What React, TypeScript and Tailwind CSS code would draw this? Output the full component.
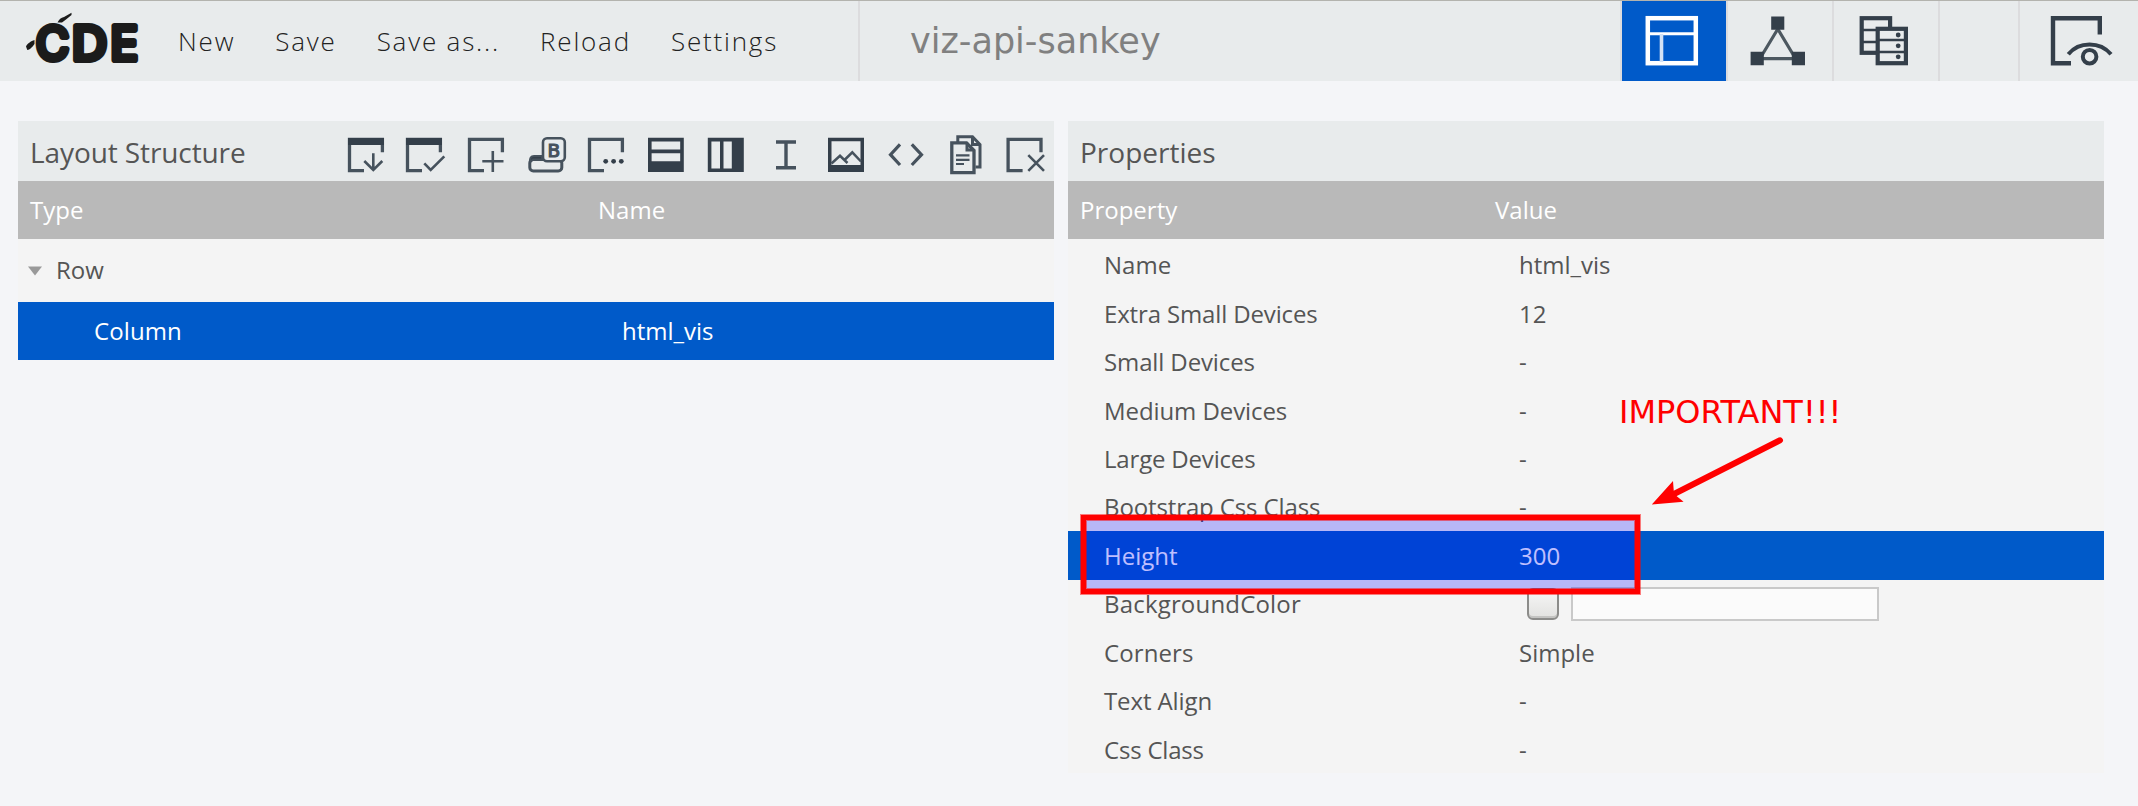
import type { ReactNode } from "react";

const INK = "#343f4a";

const menu = ["New", "Save", "Save as...", "Reload", "Settings"];

const properties: [string, string, string][] = [
  ["Name", "html_vis", ""],
  ["Extra Small Devices", "12", "tracking-[-0.14px]"],
  ["Small Devices", "-", "tracking-[-0.12px]"],
  ["Medium Devices", "-", "tracking-[-0.08px]"],
  ["Large Devices", "-", "tracking-[-0.18px]"],
  ["Bootstrap Css Class", "-", "tracking-[-0.12px]"],
  ["Height", "300", ""],
  ["BackgroundColor", "", "tracking-[0.18px]"],
  ["Corners", "Simple", "tracking-[0.1px]"],
  ["Text Align", "-", "tracking-[-0.1px]"],
  ["Css Class", "-", "tracking-[-0.2px]"],
];

function Tool({ children }: { children: ReactNode }) {
  return (
    <svg width="60" height="60" viewBox="0 0 60 60" fill="none" stroke="#46525d" strokeWidth="3" className="shrink-0">
      {children}
    </svg>
  );
}

function Frame({ x = 0, head = false }: { x?: number; head?: boolean }) {
  return (
    <g transform={`translate(${x} 0)`}>
      <path d="M28 49.6H13.5V18.3H46.4V31.2" strokeWidth="3.3" />
      {head && <path d="M12 20.5H48" stroke={INK} strokeWidth="7" />}
    </g>
  );
}

function Toolbar() {
  return (
    <div className="flex w-[718px] overflow-hidden">
      <Tool>
        <Frame head />
        <path d="M37.3 32.3V49.5M28.3 40L37.3 49L46.3 40" strokeWidth="2.6" />
      </Tool>
      <Tool>
        <Frame x={-2} head />
        <path d="M28.3 42.3L34.7 49L48.3 35.3" strokeWidth="2.6" />
      </Tool>
      <Tool>
        <Frame />
        <path d="M26.3 40.3H47.5M36.8 30V51" strokeWidth="2.6" />
      </Tool>
      <Tool>
        <rect x="13.8" y="38.6" width="32" height="11.4" rx="3.5" />
        <path d="M14 41C13.5 37 15 35 18 35H26V38.5H17Z" fill={INK} strokeWidth="2" />
        <rect x="27" y="17.2" width="21.8" height="23" rx="4" fill="#e8ebec" strokeWidth="2.6" />
        <text x="37.9" y="35.6" textAnchor="middle" fontFamily="DejaVu Sans, sans-serif" fontSize="18.5" fill="#46525d" stroke="#46525d" strokeWidth="1.2">
          B
        </text>
      </Tool>
      <Tool>
        <Frame />
        <g fill={INK} stroke="none">
          <circle cx="29.7" cy="40.3" r="2.4" />
          <circle cx="37.6" cy="40.3" r="2.4" />
          <circle cx="45.3" cy="40.3" r="2.4" />
        </g>
      </Tool>
      <Tool>
        <path d="M12 16.7H47.8V51H12ZM15.6 20.6V28.4H44.2V20.6ZM15.6 32.2V40.2H44.2V32.2Z" fill={INK} fillRule="evenodd" stroke="none" />
      </Tool>
      <Tool>
        <path d="M11.8 16.7H47.8V51H11.8ZM15.4 20.6V47.6H24V20.6ZM27.5 20.6V47.6H35.8V20.6Z" fill={INK} fillRule="evenodd" stroke="none" />
      </Tool>
      <Tool>
        <path d="M20 21H40M20 46.8H40M30 21V46.8" strokeWidth="3.4" />
      </Tool>
      <Tool>
        <path d="M12 16.7H48V51H12ZM15.5 20.2V44H44.5V20.2Z" fill={INK} fillRule="evenodd" stroke="none" />
        <path d="M15.5 42.5L24 34.8L31.5 42M28.5 39L36.3 31.3L45 40.5" strokeWidth="2.5" />
      </Tool>
      <Tool>
        <path d="M24 23.3L14.5 33.7L24 44M35.8 23.3L45.5 33.7L35.8 44" strokeWidth="3.2" />
      </Tool>
      <Tool>
        <path d="M21.8 21V15.8H36.5L44 23.5V46H39.5M36.5 15.8V23.5H44" strokeWidth="3" />
        <path d="M15.8 21.8H30.5L38 29.5V51.6H15.8Z" fill="#e8ebec" strokeWidth="3.3" />
        <path d="M31 21.8V29H38" />
        <path d="M20 34.3H33.5M20 38.9H33.5M20 43H28" strokeWidth="2.2" />
      </Tool>
      <Tool>
        <Frame x={-1.4} />
        <path d="M32.3 34.2L48 49.8M48 34.2L32.3 49.8" strokeWidth="2.6" />
      </Tool>
    </div>
  );
}

function Logo() {
  return (
    <svg width="150" height="80" viewBox="0 1 150 80" className="shrink-0">
      <g fontFamily="Inter, sans-serif" fontWeight="400" fontSize="46" fill="#1b1b1b" stroke="#1b1b1b" strokeWidth="6.2" strokeLinejoin="round">
        <text x="36" y="59.6" textLength="33" lengthAdjust="spacingAndGlyphs">C</text>
        <text x="72" y="59.6" textLength="35" lengthAdjust="spacingAndGlyphs">D</text>
        <text x="110.5" y="59.6" textLength="27.5" lengthAdjust="spacingAndGlyphs">E</text>
      </g>
      <path d="M57.5 22.5C59 19.5 61 17.5 64 17L71.5 12.8L71.5 15L66 19.5L62 22.5Z" fill="#1b1b1b" />
      <path d="M34.5 40C31 41 27 44 26 46.5L27.3 50C30.5 49.5 33 46 34.5 44Z" fill="#1b1b1b" />
    </svg>
  );
}

function HeaderTabs() {
  return (
    <div className="ml-auto flex">
      <div className="w-[108px] border-x-2 border-[#dcdcde] bg-[#005ac9]">
        <svg width="104" height="80" viewBox="1622 1 104 80" fill="none" stroke="#fff">
          <rect x="1647.8" y="18.2" width="48" height="45" strokeWidth="4.5" />
          <path d="M1648 33.7H1695" strokeWidth="3" />
          <path d="M1661.5 34V62" strokeWidth="3.6" stroke="#d3e2f5" />
        </svg>
      </div>
      <svg width="104" height="80" viewBox="1728 1 104 80" fill={INK} stroke="#4d5860">
        <path d="M1777.8 29L1761.5 56M1777.8 29L1794 56M1762 58.7H1793" strokeWidth="3.2" />
        <path d="M1771.2 16.4H1784.3V29.8H1771.2ZM1750.6 51.8H1763.8V65.3H1750.6ZM1791.8 51.8H1805V65.3H1791.8Z" stroke="none" />
      </svg>
      <div className="w-[108px] border-x-2 border-[#dcdcde]">
        <svg width="104" height="80" viewBox="1834 1 104 80" fill="none" stroke={INK}>
          <rect x="1861.7" y="18.2" width="28.4" height="34.6" strokeWidth="4.2" />
          <path d="M1862 30H1890M1862 42H1890" strokeWidth="2.4" />
          <rect x="1877.7" y="28.8" width="28.2" height="34.4" strokeWidth="4.2" fill="#e8ebec" />
          <path d="M1878 40H1906M1878 52H1906" strokeWidth="2.4" />
          <g fill={INK} stroke="none">
            <circle cx="1898.2" cy="35" r="2.4" />
            <circle cx="1898.2" cy="45.8" r="2.4" />
            <circle cx="1898.2" cy="56.8" r="2.4" />
          </g>
        </svg>
      </div>
      <div className="w-[80px] border-r-2 border-[#dcdcde]" />
      <svg width="118" height="80" viewBox="2020 1 118 80" fill="none" stroke={INK} strokeWidth="4.4">
        <path d="M2071 63.2H2053V18.2H2099.8V34.4" />
        <path d="M2068.3 54.2C2079 41.2 2100 41.2 2111 54.2" strokeWidth="4" />
        <circle cx="2089.6" cy="56.7" r="6.8" strokeWidth="4" />
      </svg>
    </div>
  );
}

export default function App() {
  return (
    <div className="relative flex h-[806px] w-[2138px] flex-col overflow-hidden bg-[#f4f5f8] font-['Open_Sans',sans-serif] text-2xl text-[#555]">
      <header className="flex h-[81px] shrink-0 border-t border-[#b3b3ae] bg-[#e8ebec]">
        <Logo />
        <nav className="flex w-[710px] items-center gap-[40px] border-r-2 border-[#dcdcde] pl-7 text-[26px] font-light tracking-[1.8px] whitespace-nowrap text-[#222]">
          {menu.map((m) => (
            <span key={m}>{m}</span>
          ))}
        </nav>
        <div className="flex items-center pl-[50px] font-['DejaVu_Sans',sans-serif] text-[35px] text-[#808080]">viz-api-sankey</div>
        <HeaderTabs />
      </header>

      <main className="flex gap-[14px] pt-10 pl-[18px]">
        <section className="w-[1036px]">
          <div className="flex h-[60px] items-center bg-[#e8ebec]">
            <h2 className="w-[318px] shrink-0 pt-1 pl-3 text-[28px] tracking-[-0.1px]">Layout Structure</h2>
            <Toolbar />
          </div>
          <div className="flex h-[58px] items-center bg-[#b9b9b9] text-white">
            <div className="w-[568px] pl-3">Type</div>
            <div className="pl-3">Name</div>
          </div>
          <div className="flex h-[63px] items-center bg-[#f4f4f4]">
            <svg width="14" height="10" viewBox="0 0 14 10" className="mr-[14px] ml-[10px]">
              <path d="M0 0.5H14L7 9.5Z" fill="#999" />
            </svg>
            <span className="pb-[2px]">Row</span>
          </div>
          <div className="flex h-[58px] items-center bg-[#005ac9] text-white">
            <div className="w-[568px] pl-[76px] tracking-[0.1px]">Column</div>
            <div className="pl-9">html_vis</div>
          </div>
        </section>

        <section className="w-[1036px]">
          <div className="flex h-[60px] items-center bg-[#e8ebec]">
            <h2 className="pt-1 pl-3 text-[28px]">Properties</h2>
          </div>
          <div className="flex h-[58px] items-center bg-[#b9b9b9] text-white">
            <div className="w-[415px] pl-3">Property</div>
            <div className="pl-3">Value</div>
          </div>
          <div className="bg-[#f4f4f4] pt-[1.5px]">
            {properties.map(([name, value, tracking]) => (
              <div
                key={name}
                className={
                  name === "Height"
                    ? "flex h-[48.45px] items-center bg-[#005ac9] text-white"
                    : "flex h-[48.45px] items-center"
                }
              >
                <div className={`w-[415px] pt-px pl-9 ${tracking}`}>{name}</div>
                {name === "BackgroundColor" ? (
                  <div className="flex items-center pt-px pl-[44px]">
                    <div className="mr-3 h-8 w-8 rounded-md border-2 border-[#8c8c8a] bg-linear-to-b from-[#f6f6f6] to-[#e2e2e0] shadow-[inset_0_-2px_0_#c4c4c2]" />
                    <div className="h-[34px] w-[308px] border-2 border-[#c9c9c9] bg-[#fbfbfb]" />
                  </div>
                ) : (
                  <div className="pt-px pl-9">{value}</div>
                )}
              </div>
            ))}
          </div>
        </section>
      </main>

      <div className="absolute top-[515px] left-[1081px] h-[79px] w-[559px] border-5 border-[#ff0000] bg-[#0000ff]/25 bg-clip-padding shadow-[0_0_0_1px_#ff000080,inset_0_0_0_1px_#ff000080]" />
      <div className="absolute top-[393px] left-[1619px] font-['DejaVu_Sans',sans-serif] text-[32px] leading-[38px] text-[#ff0000]">IMPORTANT!!!</div>
      <svg width="150" height="80" viewBox="1640 430 150 80" className="absolute top-[430px] left-[1640px]">
        <path d="M1780 440.3L1673 494.5" stroke="#ff0000" strokeWidth="6" strokeLinecap="round" />
        <path d="M1651.8 504.4L1673 481L1674 494L1683.6 501.7Z" fill="#ff0000" />
      </svg>
    </div>
  );
}
